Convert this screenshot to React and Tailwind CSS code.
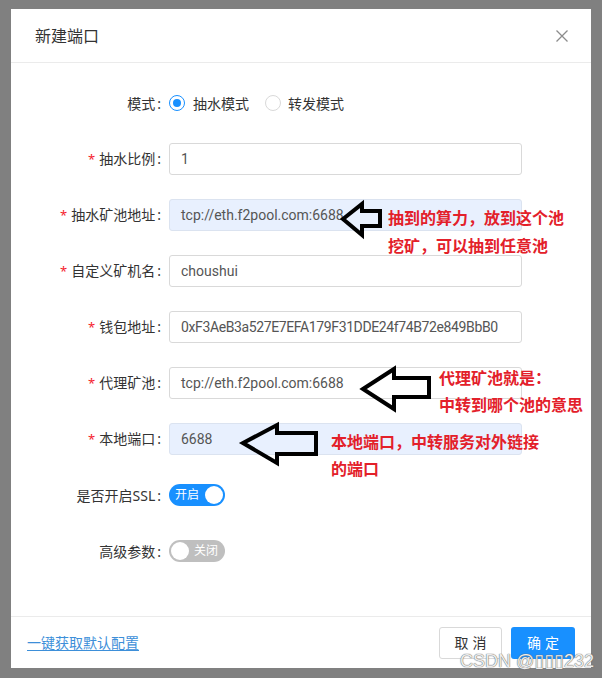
import React from "react";

const F = { fontFamily: '"Noto Sans", "Noto Sans CJK SC", sans-serif' };

function Label({ req, children }) {
  return (
    <div className="w-[150px] shrink-0 text-right text-[14px] text-[#333] whitespace-nowrap">
      {req && <span className="text-[#f5222d] mr-[4px] text-[13px]">*</span>}
      {children}
      <span className="ml-[2px]">:</span>
    </div>
  );
}

function Input({ value, auto, tight }) {
  return (
    <div
      className={
        "w-[353px] h-[32px] flex items-center border rounded-[3px] px-[11px] text-[14px] text-[#555] " +
        (auto ? "bg-[#e8f0fe] border-[#dbe3f0] " : "bg-white border-[#d9d9d9] ") +
        (tight ? "tracking-[-0.38px]" : "")
      }
      style={{ fontFamily: 'Roboto, "Noto Sans CJK SC", sans-serif' }}
    >
      {value}
    </div>
  );
}

function Row({ children }) {
  return <div className="flex items-center h-[32px] mb-[24px] gap-[8px]">{children}</div>;
}

export default function App() {
  return (
    <div className="relative w-[602px] h-[678px] bg-[#808080] pt-[9px] pl-[11px] overflow-hidden" style={F}>
      <div className="w-[580px] h-[659px] bg-white flex flex-col">
        <div className="h-[54px] shrink-0 border-b border-[#ebebeb] flex items-center justify-between pl-[24px] pr-[20px]">
          <div className="text-[16px] text-[#333]">新建端口</div>
          <svg width="16" height="16" viewBox="0 0 16 16" className="mr-[1px]">
            <path d="M2.5 2.5 L13.5 13.5 M13.5 2.5 L2.5 13.5" stroke="#8c8c8c" strokeWidth="1.3" fill="none" />
          </svg>
        </div>
        <div className="flex-1 pt-[24px]">
          <Row>
            <Label>模式</Label>
            <div className="flex items-center text-[14px] text-[#333]">
              <span className="w-[16px] h-[16px] rounded-full border border-[#1890ff] flex items-center justify-center">
                <span className="w-[8px] h-[8px] rounded-full bg-[#1890ff]" />
              </span>
              <span className="ml-[8px]">抽水模式</span>
              <span className="ml-[16px] w-[16px] h-[16px] rounded-full border border-[#d9d9d9] bg-white" />
              <span className="ml-[7px]">转发模式</span>
            </div>
          </Row>
          <Row>
            <Label req>抽水比例</Label>
            <Input value="1" />
          </Row>
          <Row>
            <Label req>抽水矿池地址</Label>
            <Input value="tcp://eth.f2pool.com:6688" auto />
          </Row>
          <Row>
            <Label req>自定义矿机名</Label>
            <Input value="choushui" />
          </Row>
          <Row>
            <Label req>钱包地址</Label>
            <Input value="0xF3AeB3a527E7EFA179F31DDE24f74B72e849BbB0" tight />
          </Row>
          <Row>
            <Label req>代理矿池</Label>
            <Input value="tcp://eth.f2pool.com:6688" />
          </Row>
          <Row>
            <Label req>本地端口</Label>
            <Input value="6688" auto />
          </Row>
          <Row>
            <Label>是否开启SSL</Label>
            <div className="w-[56px] h-[22px] rounded-full bg-[#1890ff] flex items-center justify-between pl-[6px] pr-[2px]">
              <span className="text-[12px] text-white leading-none">开启</span>
              <span className="w-[18px] h-[18px] rounded-full bg-white" />
            </div>
          </Row>
          <Row>
            <Label>高级参数</Label>
            <div className="w-[56px] h-[22px] rounded-full bg-[#bfbfbf] flex items-center justify-between pl-[2px] pr-[7px]">
              <span className="w-[18px] h-[18px] rounded-full bg-white" />
              <span className="text-[12px] text-white leading-none">关闭</span>
            </div>
          </Row>
        </div>
        <div className="h-[52px] shrink-0 border-t border-[#ebebeb] flex items-center justify-between px-[16px]">
          <span className="text-[14px] text-[#3d8fd9] underline underline-offset-2">一键获取默认配置</span>
          <div className="flex items-center gap-[9px]">
            <div className="w-[63px] h-[32px] border border-[#d9d9d9] rounded-[3px] flex items-center justify-center text-[14px] text-[#333] tracking-[4px] pl-[4px]">
              取消
            </div>
            <div className="w-[64px] h-[32px] bg-[#1890ff] rounded-[3px] flex items-center justify-center text-[14px] text-white tracking-[4px] pl-[4px]">
              确定
            </div>
          </div>
        </div>
      </div>

      <svg className="absolute left-0 top-0 pointer-events-none" width="602" height="678" viewBox="0 0 602 678">
        <g fill="none" stroke="#000" strokeWidth="4" strokeLinejoin="miter">
          <polygon points="343,219 362,204 362,211 380,211 380,226 362,226 362,235" />
          <polygon points="363,389 394,369 394,378 429,378 429,397 394,397 394,409" />
          <polygon points="243,443 277,425 277,433 316,433 316,454 277,454 277,463" />
        </g>
      </svg>

      <div
        className="absolute left-[388px] top-[203px] text-[16px] font-bold text-[#e3202a] leading-[28px] whitespace-nowrap"
        style={{ fontFamily: '"Noto Sans CJK SC", sans-serif' }}
      >
        <div>抽到的算力，放到这个池</div>
        <div>挖矿，可以抽到任意池</div>
      </div>
      <div
        className="absolute left-[439px] top-[364px] text-[16px] font-bold text-[#e3202a] leading-[27px] whitespace-nowrap"
        style={{ fontFamily: '"Noto Sans CJK SC", sans-serif' }}
      >
        <div>代理矿池就是：</div>
        <div>中转到哪个池的意思</div>
      </div>
      <div
        className="absolute left-[331px] top-[428px] text-[16px] font-bold text-[#e3202a] leading-[27px] whitespace-nowrap"
        style={{ fontFamily: '"Noto Sans CJK SC", sans-serif' }}
      >
        <div>本地端口，中转服务对外链接</div>
        <div>的端口</div>
      </div>

      <div
        className="absolute left-[460px] top-[649px] text-[18px] leading-[24px] text-[#ececec] whitespace-nowrap"
        style={{ fontFamily: '"Liberation Sans", "DejaVu Sans", sans-serif', textShadow: "0 0 1px #666, 0 0 1px #666" }}
      >
        CSDN @▯▯▯232
      </div>
    </div>
  );
}
